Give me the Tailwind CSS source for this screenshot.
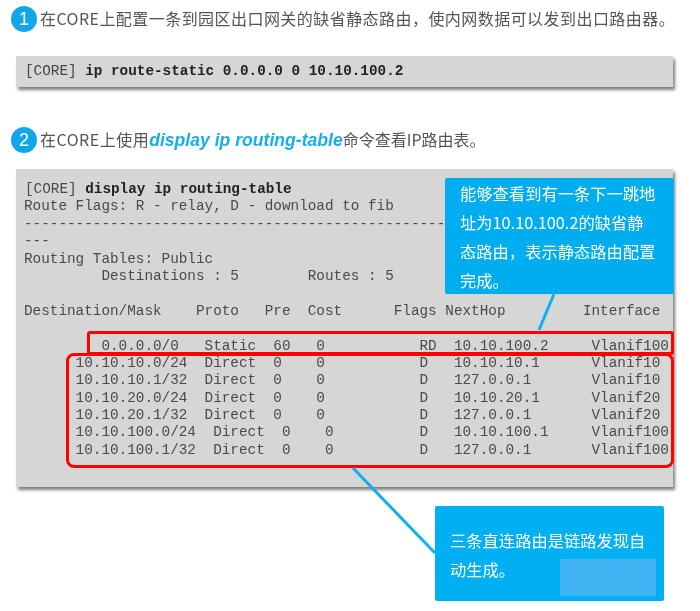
<!DOCTYPE html>
<html lang="zh">
<head>
<meta charset="utf-8">
<script src="https://cdn.jsdelivr.net/npm/@tailwindcss/browser@4"></script>
</head>
<body class="bg-white">
<div class="relative w-[700px] h-[611px] overflow-hidden bg-white blur-[0.35px] font-['Noto_Sans_CJK_SC','Liberation_Sans',sans-serif]">

    <!-- step 1 -->
    <div class="flex items-center h-[26px] mt-[6px] ml-[11px]">
        <div class="flex items-center justify-center w-[26px] h-[26px] rounded-full bg-[#0fa6ea] text-white text-[18px] font-['Liberation_Sans',sans-serif]">1</div>
        <p class="ml-[3px] text-[16px] leading-[24px] mb-[2px] tracking-[0.45px] text-[#555555] whitespace-nowrap">在CORE上配置一条到园区出口网关的缺省静态路由，使内网数据可以发到出口路由器。</p>
    </div>
    <div class="mt-[24px] ml-[16px] w-[657px] h-[31px] bg-[#d6d6d6] shadow-[2px_3px_3px_rgba(0,0,0,0.5)] pl-[9px] font-['Liberation_Mono',monospace] text-[14.33px] leading-[31px] text-[#444444] whitespace-pre">[CORE] <b class="text-[#222222]">ip route-static 0.0.0.0 0 10.10.100.2</b></div>

    <!-- step 2 -->
    <div class="flex items-center h-[26px] mt-[40px] ml-[11px]">
        <div class="flex items-center justify-center w-[26px] h-[26px] rounded-full bg-[#0fa6ea] text-white text-[18px] font-['Liberation_Sans',sans-serif]">2</div>
        <p class="ml-[3px] text-[16px] leading-[24px] mb-[2px] tracking-[0.5px] text-[#555555] whitespace-nowrap">在CORE上使用<span class="font-['Liberation_Sans',sans-serif] text-[17.6px] tracking-normal font-bold italic text-[#16aeee]">display ip routing-table</span><span class="tracking-normal">命令查看IP路由表。</span></p>
    </div>
    <div class="mt-[16px] ml-[16px] w-[657px] h-[318px] bg-[#d6d6d6] shadow-[2px_3px_3px_rgba(0,0,0,0.5)] pt-[12px] pl-[8px] font-['Liberation_Mono',monospace] text-[14.33px] leading-[17.4px] text-[#4a4a4a] [&>div]:whitespace-pre [&>div]:h-[17.4px]">
        <div class="pl-[1px]">[CORE] <b class="text-[#222222]">display ip routing-table</b></div>
        <div>Route Flags: R - relay, D - download to fib</div>
        <div>-------------------------------------------------</div>
        <div>---</div>
        <div>Routing Tables: Public</div>
        <div>         Destinations : 5        Routes : 5</div>
        <div></div>
        <div>Destination/Mask    Proto   Pre  Cost      Flags NextHop         Interface</div>
        <div></div>
        <div>         0.0.0.0/0   Static  60   0           RD  10.10.100.2     Vlanif100</div>
        <div>      10.10.10.0/24  Direct  0    0           D   10.10.10.1      Vlanif10</div>
        <div>      10.10.10.1/32  Direct  0    0           D   127.0.0.1       Vlanif10</div>
        <div>      10.10.20.0/24  Direct  0    0           D   10.10.20.1      Vlanif20</div>
        <div>      10.10.20.1/32  Direct  0    0           D   127.0.0.1       Vlanif20</div>
        <div>      10.10.100.0/24  Direct  0    0          D   10.10.100.1     Vlanif100</div>
        <div>      10.10.100.1/32  Direct  0    0          D   127.0.0.1       Vlanif100</div>
    </div>

    <!-- red highlights -->
    <div class="absolute left-[87px] top-[331px] w-[587px] h-[24px] border-[3px] border-[#ff0000] rounded-[3px]"></div>
    <div class="absolute left-[66px] top-[353px] w-[608px] h-[115px] border-[3px] border-[#ff0000] rounded-[8px]"></div>

    <!-- connectors -->
    <svg class="absolute left-0 top-0" width="700" height="611" viewBox="0 0 700 611" fill="none">
        <path d="M554 294L539 330" stroke="#0fb0ee" stroke-width="3"/>
        <path d="M353 468L435 553" stroke="#0fb0ee" stroke-width="3"/>
    </svg>

    <!-- callouts -->
    <div class="absolute left-[445px] top-[178px] w-[229px] h-[116px] rounded-[2px] bg-[#00aeef] pl-[15px] pt-[1px] text-[16.3px] leading-[29px] text-white">
        <p class="whitespace-nowrap">能够查看到有一条下一跳地</p>
        <p class="whitespace-nowrap">址为10.10.100.2的缺省静</p>
        <p class="whitespace-nowrap">态路由，表示静态路由配置</p>
        <p class="whitespace-nowrap">完成。</p>
    </div>
    <div class="absolute left-[435px] top-[506px] w-[229px] h-[95px] rounded-[2px] bg-[#00b0f3] pl-[15px] pt-[20px] text-[16.3px] leading-[29px] text-white">
        <p class="whitespace-nowrap">三条直连路由是链路发现自</p>
        <p class="whitespace-nowrap">动生成。</p>
        <div class="absolute left-[125px] top-[53px] w-[96px] h-[37px] bg-[#40b2f2]"></div>
    </div>
</div>
</body>
</html>
